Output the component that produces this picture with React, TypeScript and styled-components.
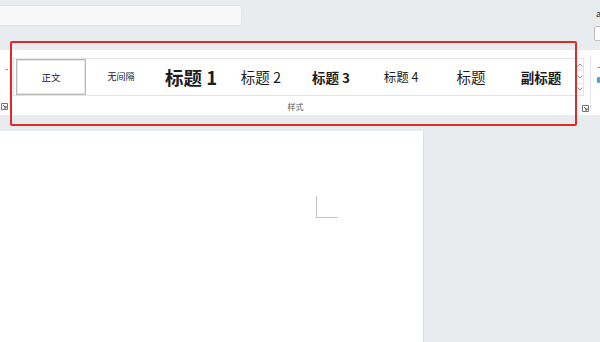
import styled, { createGlobalStyle } from "styled-components";

const GlobalStyle = createGlobalStyle`
  body {
    margin: 0;
    background: #e9ecef;
    font-family: "Noto Sans CJK SC", "Noto Sans", sans-serif;
  }
`;

const STYLES = [
  { label: "正文", size: 9.5, weight: 400, selected: true },
  { label: "无间隔", size: 9, weight: 400 },
  { label: "标题 1", size: 18.5, weight: 700 },
  { label: "标题 2", size: 14.5, weight: 400 },
  { label: "标题 3", size: 13.5, weight: 700 },
  { label: "标题 4", size: 12.5, weight: 400 },
  { label: "标题", size: 14.5, weight: 400 },
  { label: "副标题", size: 13.5, weight: 700 },
];

const Launcher = () => (
  <svg width="7" height="7" viewBox="0 0 7 7">
    <path d="M0.5 0.5h6v6h-6z" fill="none" stroke="#777" strokeWidth="1" />
    <path d="M2 2l3 3M5 3v2H3" fill="none" stroke="#555" strokeWidth="1" />
  </svg>
);

const Chevron = ({ up }: { up?: boolean }) => (
  <svg width="6" height="4" viewBox="0 0 6 4">
    <path
      d={up ? "M0.5 3.5L3 1l2.5 2.5" : "M0.5 0.5L3 3l2.5-2.5"}
      fill="none"
      stroke="#888"
      strokeWidth="0.9"
    />
  </svg>
);

const App = () => {
  return (
    <Screen>
      <GlobalStyle />
      <TopBar>
        <SearchBox />
        <TopRight>
          <TinyText>a</TinyText>
          <TinyInput />
        </TopRight>
      </TopBar>
      <Ribbon>
        <PrevGroup>
          <StubText>-</StubText>
          <Launcher />
        </PrevGroup>
        <StylesGroup>
          <GalleryRow>
            <Gallery>
              {STYLES.map((s) => (
                <StyleItem key={s.label} $selected={!!s.selected}>
                  <StyleLabel $size={s.size} $weight={s.weight}>
                    {s.label}
                  </StyleLabel>
                </StyleItem>
              ))}
            </Gallery>
            <ScrollColumn>
              <ScrollCell>
                <Chevron up />
              </ScrollCell>
              <ScrollCell>
                <Chevron />
              </ScrollCell>
              <ScrollCell>
                <Chevron />
              </ScrollCell>
            </ScrollColumn>
          </GalleryRow>
          <GroupFooter>
            <GroupName>样式</GroupName>
            <LauncherSlot>
              <Launcher />
            </LauncherSlot>
          </GroupFooter>
        </StylesGroup>
        <NextGroup>
          <StubText>-</StubText>
          <BlueDot />
        </NextGroup>
      </Ribbon>
      <Gap />
      <Workspace>
        <Page>
          <CornerMark />
        </Page>
      </Workspace>
      <Highlight />
    </Screen>
  );
};

const Screen = styled.div`
  position: relative;
  width: 600px;
  height: 342px;
  overflow: hidden;
  display: flex;
  flex-direction: column;
  background: #e9ecef;
`;

const TopBar = styled.div`
  height: 50px;
  display: flex;
  justify-content: space-between;
  flex-shrink: 0;
`;

const SearchBox = styled.div`
  margin: 5px 0 0 -6px;
  width: 246px;
  height: 19px;
  background: #f8f8f8;
  border: 1px solid #dfe1e4;
  border-radius: 3px;
`;

const TopRight = styled.div`
  flex: 0 0 5px;
  min-width: 0;
  display: flex;
  flex-direction: column;
  align-items: flex-start;
  padding-top: 9px;
  gap: 7px;
  overflow: visible;
`;

const TinyText = styled.span`
  font-size: 9px;
  line-height: 10px;
  color: #333;
  margin-left: 1px;
`;

const TinyInput = styled.div`
  flex-shrink: 0;
  width: 12px;
  height: 13px;
  margin-left: -1px;
  border: 1px solid #bbb;
  border-radius: 2px;
  background: #fff;
`;

const Ribbon = styled.div`
  height: 65px;
  background: #fff;
  display: flex;
  flex-shrink: 0;
`;

const PrevGroup = styled.div`
  width: 10px;
  display: flex;
  flex-direction: column;
  justify-content: space-between;
  align-items: flex-end;
  padding: 10px 1px 0 0;
  border-right: 1px solid #eceef0;
  box-sizing: border-box;
  margin: 4px 0 5px;
`;

const StubText = styled.span`
  font-size: 9px;
  color: #444;
  line-height: 9px;
`;

const StylesGroup = styled.div`
  width: 580px;
  display: flex;
  flex-direction: column;
  padding: 8px 0 0 3px;
  box-sizing: border-box;
`;

const GalleryRow = styled.div`
  display: flex;
  height: 38px;
`;

const Gallery = styled.div`
  width: 562px;
  display: flex;
  border: 1px solid #e3e4e6;
  border-right: none;
  box-sizing: border-box;
  padding: 0 0 0 2px;
  overflow: hidden;
`;

const StyleItem = styled.div<{ $selected: boolean }>`
  flex: 0 0 70px;
  height: 36px;
  box-sizing: border-box;
  display: flex;
  align-items: center;
  justify-content: center;
  padding-bottom: 1px;
  border: 1px solid ${(p) => (p.$selected ? "#b9b9b9" : "transparent")};
  box-shadow: ${(p) => (p.$selected ? "inset 0 0 0 1px #e6e6e6" : "none")};
`;

const StyleLabel = styled.span<{ $size: number; $weight: number }>`
  font-size: ${(p) => p.$size}px;
  font-weight: ${(p) => p.$weight};
  color: #1c1c1c;
  white-space: nowrap;
`;

const ScrollColumn = styled.div`
  width: 9px;
  display: flex;
  flex-direction: column;
  border: 1px solid #e3e4e6;
  box-sizing: border-box;
`;

const ScrollCell = styled.div`
  flex: 1;
  display: flex;
  align-items: center;
  justify-content: center;
  & + & {
    border-top: 1px solid #e3e4e6;
  }
`;

const GroupFooter = styled.div`
  position: relative;
  flex: 1;
  display: flex;
  align-items: center;
  justify-content: center;
  padding-right: 12px;
`;

const GroupName = styled.span`
  font-size: 8px;
  color: #555;
  margin-top: 1px;
`;

const LauncherSlot = styled.div`
  position: absolute;
  right: 1px;
  bottom: 3px;
  display: flex;
`;

const NextGroup = styled.div`
  flex: 1;
  border-left: 1px solid #e3e4e6;
  margin: 5px 0 5px;
  padding: 7px 0 0 6px;
  display: flex;
  flex-direction: column;
  gap: 6px;
`;

const BlueDot = styled.div`
  width: 3px;
  height: 6px;
  background: #5b9bd5;
  border-radius: 1px;
`;

const Gap = styled.div`
  height: 16px;
  flex-shrink: 0;
`;

const Workspace = styled.div`
  flex: 1;
  display: flex;
`;

const Page = styled.div`
  position: relative;
  width: 424px;
  background: #fff;
  border-right: 1px solid #dadde1;
  box-sizing: border-box;
`;

const CornerMark = styled.div`
  position: absolute;
  left: 316px;
  top: 65px;
  width: 21px;
  height: 21px;
  border-left: 1px solid #c4c4c4;
  border-bottom: 1px solid #c4c4c4;
`;

const Highlight = styled.div`
  position: absolute;
  left: 10px;
  top: 41px;
  width: 567px;
  height: 85px;
  border: 2px solid #dd2a2a;
  border-radius: 2px;
  box-sizing: border-box;
  pointer-events: none;
`;

export default App;
